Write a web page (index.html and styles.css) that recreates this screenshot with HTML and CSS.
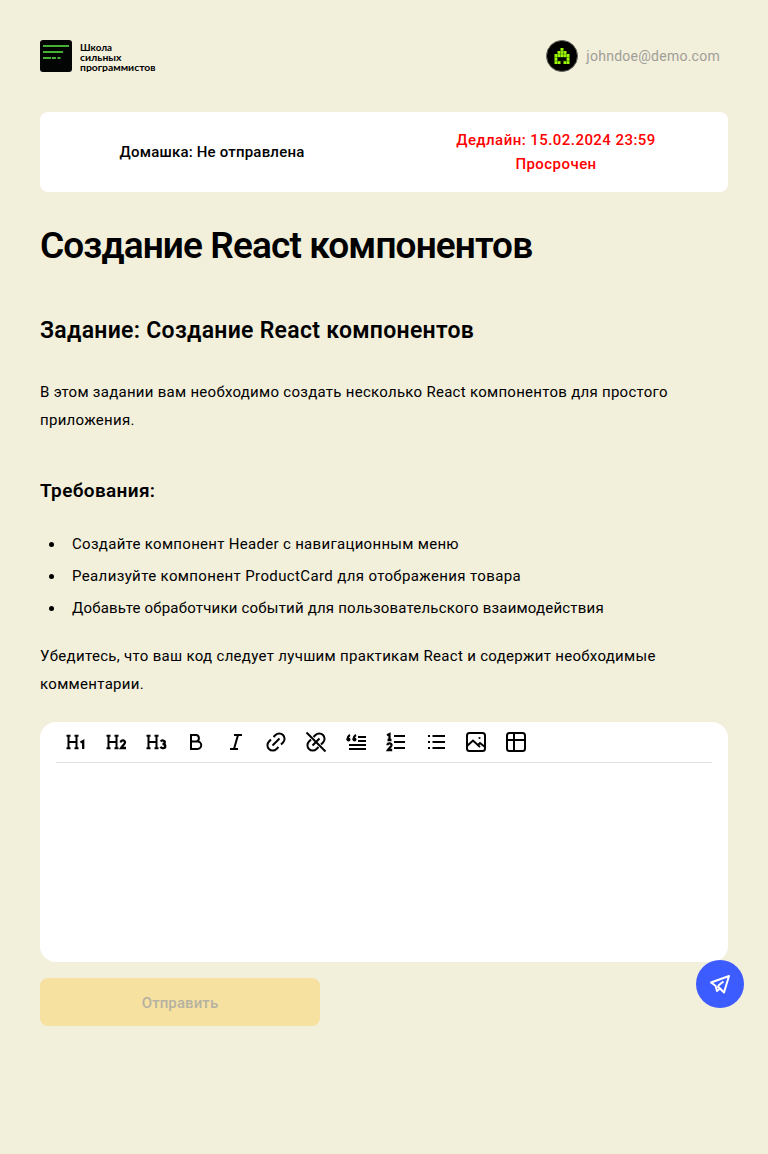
FILE: index.html
```html
<!DOCTYPE html>
<html lang="ru">
<head>
<meta charset="utf-8">
<title>Создание React компонентов</title>
<link rel="stylesheet" href="styles.css">
</head>
<body>
<div class="page">
  <header class="header">
    <a class="logo">
      <svg width="116" height="32" viewBox="0 0 116 32">
        <rect width="32" height="32" rx="3" fill="#030504"/>
        <path d="M3 6h26M3 12h20M3 18h8M12 18h4M17.500 18h3" stroke="#46b035" stroke-width="1.800"/>
        <g class="logo-text">
          <text x="40" y="10.700" textLength="32" lengthAdjust="spacingAndGlyphs">Школа</text>
          <text x="40" y="20.600" textLength="41.500" lengthAdjust="spacingAndGlyphs">сильных</text>
          <text x="40" y="30.500" textLength="75.500" lengthAdjust="spacingAndGlyphs">программистов</text>
        </g>
      </svg>
    </a>
    <div class="user">
      <svg width="32" height="32" viewBox="0 0 32 32">
        <circle cx="16" cy="16" r="15.500" fill="#000" stroke="#66665f"/>
        <path d="M14.500 8h3v3h3v3h3v10h-6v-3h3v-4h-9v4h3v3h-6V14h3v-3h3z" fill="#9dfa00"/>
        <path d="M14.500 11h3M11.500 14h9M8.500 17.500h15M8.500 21h15M11.500 14v10M14.500 11v6M17.500 11v6M20.500 14v10" stroke="#2e5200" stroke-width=".5"/>
      </svg>
      <span class="email">johndoe@demo.com</span>
    </div>
  </header>

  <section class="status">
    <div class="status-cell"><span class="homework">Домашка: Не отправлена</span></div>
    <div class="status-cell late"><span class="deadline">Дедлайн: 15.02.2024 23:59</span><span class="overdue">Просрочен</span></div>
  </section>

  <h1 class="title">Создание React компонентов</h1>
  <article class="content">
    <h2 class="task">Задание: Создание React компонентов</h2>
    <p class="intro">В этом задании вам необходимо создать несколько React компонентов для простого<br>приложения.</p>
    <h3 class="requirements">Требования:</h3>
    <ul class="list">
      <li>Создайте компонент Header с навигационным меню</li>
      <li class="wide">Реализуйте компонент ProductCard для отображения товара</li>
      <li class="tight">Добавьте обработчики событий для пользовательского взаимодействия</li>
    </ul>
    <p class="note">Убедитесь, что ваш код следует лучшим практикам React и содержит необходимые<br>комментарии.</p>
  </article>

  <section class="editor">
    <div class="toolbar">
      <svg class="tool" viewBox="0 0 24 24"><path d="M4.500 5.500v13M12.500 5.500v13M4.500 12h8M2.500 5.800h4M10.500 5.800h4M2.500 18.200h4M10.500 18.200h4"/><path class="digit" d="M16.500 12.500l2.700-1.500v8"/></svg>
      <svg class="tool" viewBox="0 0 24 24"><path d="M4.500 5.500v13M12.500 5.500v13M4.500 12h8M2.500 5.800h4M10.500 5.800h4M2.500 18.200h4M10.500 18.200h4"/><path class="digit" d="M16.800 12.500c0-3 4.400-2.500 4.200 0-.1 1.500-2.500 3-4 5.500h5"/></svg>
      <svg class="tool" viewBox="0 0 24 24"><path d="M4.500 5.500v13M12.500 5.500v13M4.500 12h8M2.500 5.800h4M10.500 5.800h4M2.500 18.200h4M10.500 18.200h4"/><path class="digit" d="M16.800 11.500c1-1.800 4.200-1 4 .8-.1 1.400-1.200 1.700-2.300 1.700 1.500 0 2.800.6 2.800 2.200 0 2.400-3.800 2.600-4.800.6"/></svg>
      <svg class="tool" viewBox="0 0 24 24"><path d="M7 5h5.500a3.400 3.400 0 0 1 0 6.500H7zM7 11.500h6.500a3.700 3.700 0 0 1 0 7.500H7z"/></svg>
      <svg class="tool" viewBox="0 0 24 24"><path d="M10 5h8M6 19h8M14 5l-4 14"/></svg>
      <svg class="tool" viewBox="0 0 24 24"><path d="M9.500 7l2-2a5 5 0 0 1 7.500 7.500l-2 2M14.500 17l-2 2a5 5 0 0 1-7.500-7.500l2-2M8.500 15.500l7-7"/></svg>
      <svg class="tool" viewBox="0 0 24 24"><path d="M9.500 7l2-2a5 5 0 0 1 7.500 7.500l-2 2M14.500 17l-2 2a5 5 0 0 1-7.500-7.500l2-2M8.500 15.500l7-7"/><path d="M2.500 2.500l19 19"/></svg>
      <svg class="tool" viewBox="0 0 24 24"><path d="M14 7h8M14 11h8M5 15h17M5 19h17"/><path d="M6 5C4 6 3.500 7.500 3.500 10M12 5C10 6 9.500 7.500 9.500 10"/><circle cx="4.500" cy="9.500" r="2" class="solid"/><circle cx="10.500" cy="9.500" r="2" class="solid"/></svg>
      <svg class="tool" viewBox="0 0 24 24"><path d="M10 6h11M10 12h11M10 18h11"/><path class="digit" d="M3 5.200L5.500 4v6M3.500 10h4M3.500 15.200c0-2.800 4.200-2.200 4 0C7.200 16.500 5.500 17.700 4 20h4.200"/></svg>
      <svg class="tool" viewBox="0 0 24 24"><path d="M8.500 6H21M8.500 12H21M8.500 18H21"/><path d="M4 6h2M4 12h2M4 18h2"/></svg>
      <svg class="tool" viewBox="0 0 24 24"><rect x="3" y="3" width="18" height="18" rx="2.500"/><path d="M3 16l6-5.500 7 6.500M14 15l2-2 5 4"/><circle cx="15.500" cy="8" r="1.100" class="solid"/></svg>
      <svg class="tool" viewBox="0 0 24 24"><rect x="3" y="3" width="18" height="18" rx="2.500"/><path d="M3 10h18M10 3v18"/></svg>
    </div>
  </section>
  <button class="submit" disabled><span>Отправить</span></button>
</div>
<a class="telegram">
  <svg width="24" height="24" viewBox="0 0 24 24"><path d="M21 4L3 10.500l4.500 3.200L9 19l3-2.500 4 4zM15.500 9.500l-4.500 3.500-1 2 3 2"/></svg>
</a>
</body>
</html>
```

FILE: styles.css
```css
* { box-sizing: border-box; }
body {
  margin: 0;
  background: #f2efdb;
  color: #000;
  font: 400 15px/24px Roboto, "Noto Sans", sans-serif;
}
.page { min-height: 1154px; padding: 40px; }
.header { display: flex; justify-content: space-between; height: 32px; padding-right: 8px; }
.logo, .user svg { display: block; }
.logo-text { font: 700 8.5px Lato, sans-serif; }
.user { display: flex; align-items: center; gap: 8px; color: #9f9e98; font-size: 14px; }
.email { letter-spacing: .26px; }
.status {
  display: grid;
  grid-template-columns: 1fr 1fr;
  align-items: center;
  height: 80px;
  margin-top: 40px;
  border-radius: 8px;
  background: #fff;
  font-weight: 500;
}
.status-cell { display: flex; flex-direction: column; align-items: center; }
.homework { letter-spacing: .2px; }
.late { color: #f00; letter-spacing: .45px; }
.title { margin: 32px 0 0; font-size: 37px; font-weight: 600; line-height: 44px; letter-spacing: -.88px; }
.task { margin: 47px 0 0; font-size: 23px; font-weight: 600; line-height: 32px; letter-spacing: .29px; }
.intro { margin: 31px 0 0; line-height: 28px; letter-spacing: .28px; }
.requirements { margin: 44px 0 0; font-size: 19px; font-weight: 600; line-height: 26px; letter-spacing: .35px; }
.list { margin: 24px 0 0; padding: 0 0 0 9px; line-height: 32px; letter-spacing: .3px; list-style: none; }
.list li { display: flex; align-items: center; gap: 18px; }
.list li::before { content: ""; width: 5px; height: 5px; border-radius: 50%; background: #000; }
.wide { letter-spacing: .37px; }
.tight { letter-spacing: .2px; }
.note { margin: 18px 0 0; line-height: 28px; letter-spacing: .31px; }
.editor { height: 240px; margin-top: 24px; padding: 0 16px; border-radius: 16px; background: #fff; }
.toolbar { display: flex; gap: 16px; height: 41px; padding: 8px; border-bottom: 1px solid #e2e2e2; }
.tool { width: 24px; height: 24px; fill: none; stroke: #000; stroke-width: 2; }
.solid { fill: #000; stroke: none; }
.digit { stroke-width: 2.3; }
.submit {
  display: block;
  width: 280px;
  height: 48px;
  margin-top: 16px;
  padding: 2px 0 0;
  border: 0;
  border-radius: 8px;
  background: #f6e1a1;
  color: #b5b2a1;
  font: 500 15px/24px Roboto, "Noto Sans", sans-serif;
  letter-spacing: .1px;
}
.telegram {
  position: fixed;
  top: 960px;
  right: 24px;
  display: grid;
  place-items: center;
  width: 48px;
  height: 48px;
  border-radius: 50%;
  background: #3d5cff;
}
.telegram svg { fill: none; stroke: #fff; stroke-width: 2; stroke-linejoin: round; }
```
